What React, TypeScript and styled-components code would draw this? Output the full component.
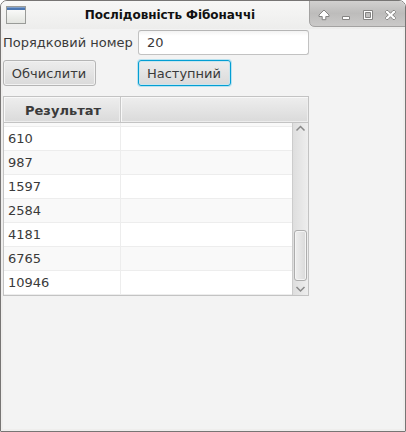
import React from "react";
import styled, { createGlobalStyle, css } from "styled-components";

const GlobalStyle = createGlobalStyle`
  * { box-sizing: border-box; }
  html, body { margin: 0; background: #fff; }
`;

const Window = styled.div`
  width: 406px;
  height: 432px;
  overflow: hidden;
  border: 1px solid #777574;
  border-radius: 7px 7px 1px 1px;
  background: #f3f3f3;
  box-shadow: inset 0 0 0 2px #efeeed;
  color: #3a3a3a;
  font: 13px/18px "DejaVu Sans", sans-serif;
`;

const TitleBar = styled.header`
  display: flex;
  height: 28px;
  background: linear-gradient(#f7f7f6, #ededec);
`;

const AppIcon = styled.svg`
  display: block;
  flex: none;
  margin: 5px 0 0 5px;
`;

const Title = styled.h1`
  flex: 1;
  margin: 0;
  padding-left: 5px;
  text-align: center;
  white-space: nowrap;
  font: bold 12px/28px "DejaVu Sans", sans-serif;
  letter-spacing: -0.06px;
  color: #111;
`;

const WindowControls = styled.svg`
  display: block;
  flex: none;
`;

const Content = styled.main`
  padding: 1px 2px 0;
`;

const Form = styled.div`
  display: grid;
  grid-template-columns: 130px 171px;
  grid-template-rows: 25px 26px;
  column-gap: 5px;
  row-gap: 5px;
  align-items: center;
`;

const Label = styled.label`
  white-space: nowrap;
`;

const Field = styled.input`
  width: 171px;
  height: 25px;
  padding: 0 8px;
  border: 1px solid #c2c2c2;
  border-top-color: #b5b5b5;
  border-radius: 3px;
  outline: 0;
  background: linear-gradient(#f3f3f3, #fff 5px);
  color: #3a3a3a;
  font: inherit;
`;

const Button = styled.button<{ $focused?: boolean }>`
  width: 93px;
  height: 26px;
  padding: 2px 1px 0 0;
  border: 1px solid #b5b5b5;
  border-radius: 3px;
  background: linear-gradient(#ededed, #dadada);
  box-shadow: inset 0 0 0 1px #f2f2f2;
  color: #3a3a3a;
  font: inherit;
  white-space: nowrap;
  ${(p) => p.$focused && css`
    border-color: #039ed3;
    box-shadow: 0 0 0 1px #b9e2f0, inset 0 0 0 1px #c9e5ee;
  `}
`;

const Table = styled.section`
  width: 306px;
  height: 200px;
  margin-top: 10px;
  border: 1px solid #c3c3c3;
  background: #fff;
`;

const Header = styled.div`
  display: grid;
  grid-template-columns: 117px 1fr;
  height: 26px;
  border-bottom: 1px solid #c3c3c3;
`;

const HeaderCell = styled.div`
  height: 25px;
  padding-left: 2px;
  border-right: 1px solid #c8c8c8;
  background: linear-gradient(#eeeeee, #dadada);
  box-shadow: inset 1px 1px #f8f8f8, inset -1px -1px #ededed;
  text-align: center;
  font-weight: bold;
  line-height: 27px;
  &:last-child { border-right: 0; }
`;

const Body = styled.div`
  display: flex;
  height: 172px;
`;

const Rows = styled.div`
  flex: 1;
  display: flex;
  flex-direction: column;
`;

const Row = styled.div<{ $odd?: boolean; $height?: number }>`
  display: grid;
  grid-template-columns: 117px 1fr;
  flex: none;
  height: ${(p) => p.$height ?? 24}px;
  border-bottom: 1px solid #ededed;
  background: ${(p) => (p.$odd ? "#f9f9f9" : "#fff")};
`;

const Cell = styled.div`
  padding-left: 4px;
  line-height: 23px;
  border-right: 1px solid #ededed;
  &:last-child { border-right: 0; }
`;

const ScrollBar = styled.div`
  display: flex;
  flex-direction: column;
  width: 16px;
  padding-left: 1px;
  border-left: 1px solid #cccccc;
  background: linear-gradient(90deg, #dedede, #eeeeee);
`;

const Thumb = styled.div`
  flex: none;
  width: 13px;
  height: 51px;
  margin-top: 90px;
  border: 1px solid #adadad;
  border-radius: 3px;
  background: linear-gradient(90deg, #eeeeee, #dadada);
  box-shadow: inset 0 0 0 1px #f4f4f4;
`;

const Arrow = styled.svg`
  display: block;
  flex: none;
`;

const values = [610, 987, 1597, 2584, 4181, 6765, 10946];

export default function App() {
  return (
    <>
      <GlobalStyle />
      <Window>
        <TitleBar>
          <AppIcon width="20" height="19" viewBox="0 0 20 19">
            <defs>
              <linearGradient id="pane" x2="0" y2="1">
                <stop stopColor="#fff" />
                <stop offset="1" stopColor="#e2e4df" />
              </linearGradient>
            </defs>
            <rect x=".5" y=".5" width="19" height="17" fill="url(#pane)" stroke="#999b98" />
            <path d="M1 1h18v3H1z" fill="#4b77b3" />
            <path d="M1 1.5h18" stroke="#7f9fc9" />
          </AppIcon>
          <Title>Послідовність Фібоначчі</Title>
          <WindowControls width="96" height="28" viewBox="0 0 96 28">
            <defs>
              <linearGradient id="controls" x2="0" y2="1">
                <stop stopColor="#d3d2d1" />
                <stop offset=".5" stopColor="#bdbcbb" />
                <stop offset="1" stopColor="#cbcac9" />
              </linearGradient>
            </defs>
            <path d="M.5-1V20Q.5 25.500 6 25.500H98V-1z" fill="url(#controls)" stroke="#a3a2a1" />
            <g fill="#fff" stroke="#858483" strokeLinejoin="round">
              <path d="M15 9 20 14v1.500h-3.200v3.200h-3.600v-3.200H10V14z" />
              <path d="M33.500 15.500h7v3h-7z" />
              <path fillRule="evenodd" d="M54.500 9.500h9v9h-9zM56.500 11.500h5v5h-5z" />
              <path d="m76.500 10.500 1-1h1.500l2.500 2.800 2.500-2.800h1.500l1 1v1l-2.800 2.500 2.800 2.500v1l-1 1h-1.500l-2.500-2.800-2.500 2.800h-1.500l-1-1v-1l2.800-2.500-2.800-2.500z" />
            </g>
          </WindowControls>
        </TitleBar>
        <Content>
          <Form>
            <Label htmlFor="index">Порядковий номер</Label>
            <Field id="index" defaultValue="20" />
            <Button>Обчислити</Button>
            <Button $focused>Наступний</Button>
          </Form>
          <Table>
            <Header>
              <HeaderCell>Результат</HeaderCell>
              <HeaderCell />
            </Header>
            <Body>
              <Rows>
                <Row $odd $height={4}>
                  <Cell />
                  <Cell />
                </Row>
                {values.map((value, i) => (
                  <Row key={value} $odd={i % 2 === 1}>
                    <Cell>{value}</Cell>
                    <Cell />
                  </Row>
                ))}
              </Rows>
              <ScrollBar>
                <Arrow width="14" height="17" viewBox="0 0 14 17" fill="none">
                  <path d="m2.500 7.500 4-4 4 4" stroke="#888" strokeWidth="1.500" />
                </Arrow>
                <Thumb />
                <Arrow width="14" height="13" viewBox="0 0 14 13" fill="none">
                  <path d="m2.500 6 4 4 4-4" stroke="#888" strokeWidth="1.500" />
                </Arrow>
              </ScrollBar>
            </Body>
          </Table>
        </Content>
      </Window>
    </>
  );
}
